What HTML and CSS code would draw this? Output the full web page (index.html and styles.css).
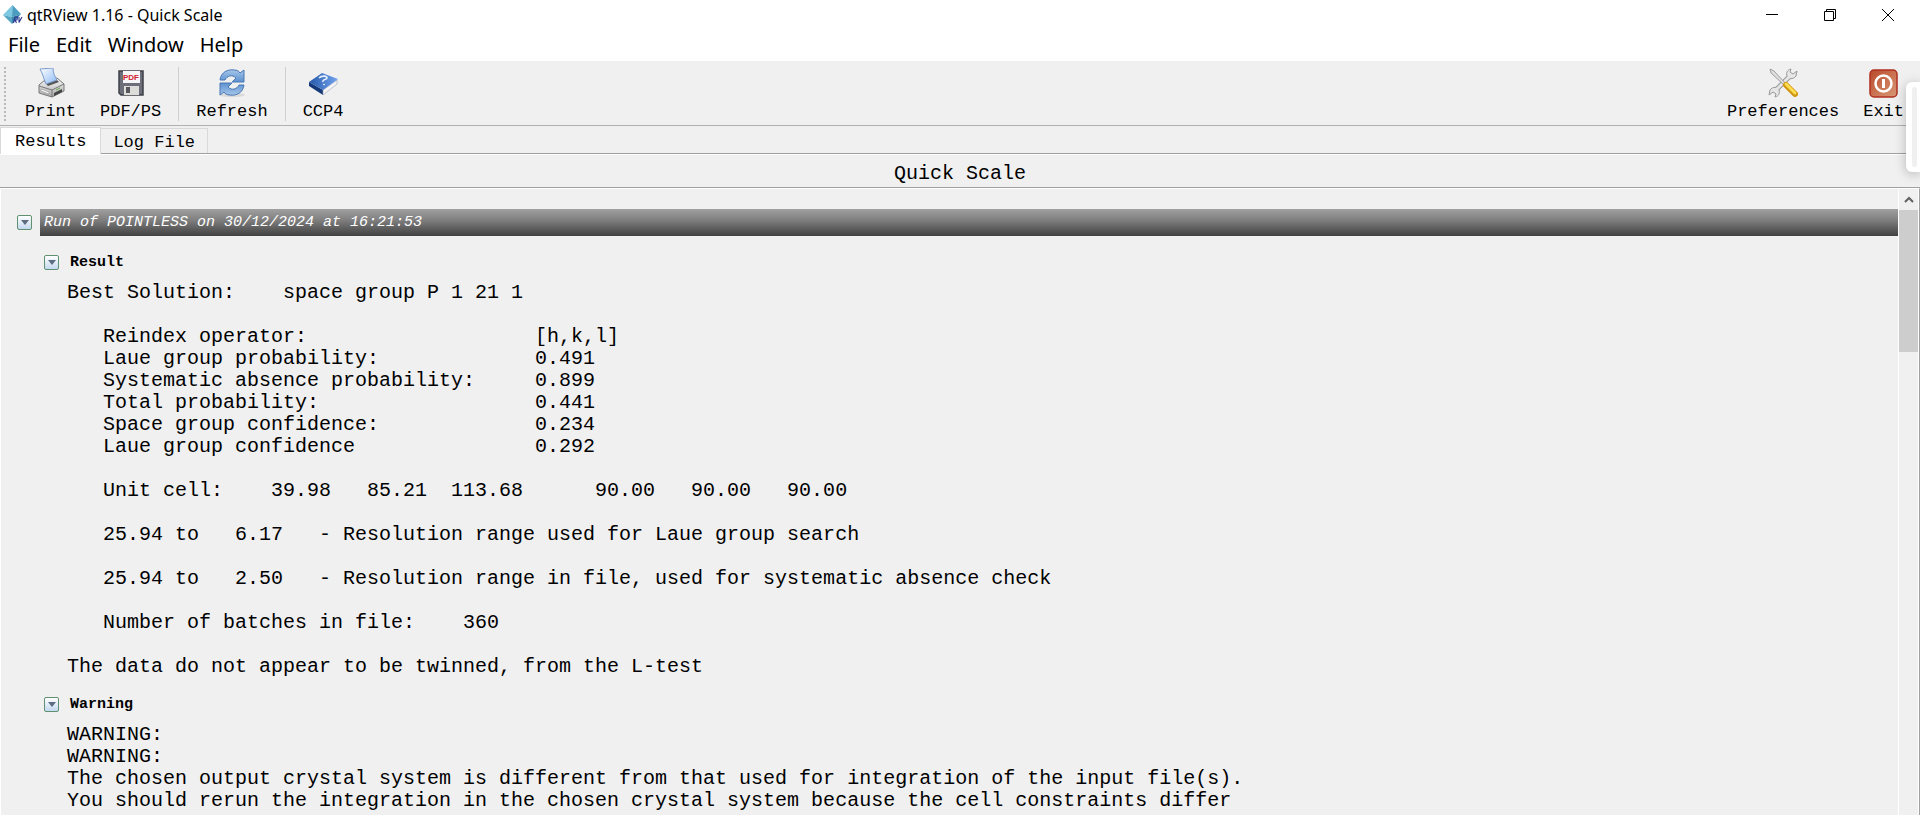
FILE: index.html
```
<!DOCTYPE html>
<html lang="en">
<head>
<meta charset="utf-8">
<title>qtRView 1.16 - Quick Scale</title>
<link rel="stylesheet" href="styles.css">
</head>
<body>
<div class="window">
  <header class="titlebar">
    <svg class="app-icon" viewBox="0 0 20 20" aria-hidden="true">
      <path d="M9.500 0L0 10l9 2z" fill="#7cc8e0"/><path d="M9.500 0L18 9l-9 3z" fill="#4a9dbe"/>
      <path d="M0 10l9 9v-7z" fill="#56a6c4"/><path d="M18 9l-9 10v-7z" fill="#3a86a8"/>
      <path d="M10.500 18l1.500-6h2.500l-.5 3h-2l1.500 3M16 12v5.500l3-5.500" fill="none" stroke="#2b3590" stroke-width="1.100"/>
    </svg>
    <h1 class="caption">qtRView 1.16 - Quick Scale</h1>
    <div class="window-buttons">
      <button class="window-button" aria-label="Minimize"><svg viewBox="0 0 12 12"><path d="M0 5.500h12"/></svg></button>
      <button class="window-button" aria-label="Restore"><svg viewBox="0 0 12 12"><path d="M.5 2.500h9v9h-9zM2.500 2.500v-2h9v9h-2"/></svg></button>
      <button class="window-button" aria-label="Close"><svg viewBox="0 0 12 12"><path d="M0 0l12 12M12 0L0 12"/></svg></button>
    </div>
  </header>
  <nav class="menubar">
    <button class="menu">File</button>
    <button class="menu">Edit</button>
    <button class="menu">Window</button>
    <button class="menu">Help</button>
  </nav>
  <div class="toolbar" role="toolbar">
    <span class="grip"></span>
    <button class="tool">
      <svg class="tool-icon" viewBox="0 0 30 30" aria-hidden="true">
        <defs>
          <linearGradient id="paper" x2="1" y2="1"><stop stop-color="#fff"/><stop offset="1" stop-color="#8db9f5"/></linearGradient>
          <linearGradient id="metal" x2="0" y2="1"><stop stop-color="#fafafa"/><stop offset="1" stop-color="#a8a8a8"/></linearGradient>
        </defs>
        <path d="M3 17l7-6 11-1 7 6v7l-12 6-13-4z" fill="url(#metal)" stroke="#777"/>
        <path d="M8 13l12-2 3 3-11 4z" fill="#555"/>
        <path d="M4 1l13-1c0 5 2 9 4 12l-11 4C8 12 7 6 4 1z" fill="url(#paper)" stroke="#7c9cca"/>
        <path d="M3 18l13 4 12-6M16 22v7" fill="none" stroke="#777"/>
        <path d="M5 21l8 3v2l-8-3z" fill="#fff" stroke="#999" stroke-width=".7"/>
        <path d="M18 25l8-4v3l-8 4z" fill="#444"/><path d="M20 22l4-2" stroke="#60b040"/>
      </svg>
      Print
    </button>
    <button class="tool">
      <svg class="tool-icon" viewBox="0 0 30 30" aria-hidden="true">
        <path d="M3 3h24v24H5l-2-2z" fill="#6c6f7a" stroke="#3e4048" stroke-width="1.500"/>
        <path d="M7 3h17v12H7z" fill="#f6f6f8"/>
        <path d="M8 18h15v9H8z" fill="#dcdcd8"/><path d="M10 19h4v6h-4z" fill="#55575c"/>
        <text class="pdf-mark" x="7" y="12">PDF</text>
      </svg>
      PDF/PS
    </button>
    <span class="divider"></span>
    <button class="tool">
      <svg class="tool-icon" viewBox="0 0 30 30" aria-hidden="true">
        <defs><linearGradient id="sync" x2="0" y2="1"><stop stop-color="#a6c6ea"/><stop offset="1" stop-color="#5c90cf"/></linearGradient></defs>
        <ellipse cx="15" cy="27" rx="13" ry="2" fill="#dadada"/>
        <path id="arrow" d="M3 12C4 4 11 1 17 2c3 0 5 1 6 3l4-3v12H15l4-4c-4-4-9-2-11 2z" fill="url(#sync)" stroke="#4878b4"/>
        <use href="#arrow" transform="rotate(180 15 14.500)"/>
      </svg>
      Refresh
    </button>
    <span class="divider"></span>
    <button class="tool">
      <svg class="tool-icon" viewBox="0 0 30 30" aria-hidden="true">
        <defs><linearGradient id="cover" x2="1"><stop stop-color="#2458a8"/><stop offset="1" stop-color="#74a4f0"/></linearGradient></defs>
        <path d="M1 14v4l14 9v-5z" fill="#143878"/>
        <path d="M15 22l14-10v4l-14 11z" fill="#f4f4f4" stroke="#9aa4b8" stroke-width=".6"/>
        <path d="M1 14l13-9 16 6-15 11z" fill="url(#cover)"/>
        <path d="M11 10c3-3 8-2 8 0s-5 1-4 4M15.500 16l1 1" fill="none" stroke="#e6f0ff" stroke-width="1.600"/>
      </svg>
      CCP4
    </button>
    <span class="spacer"></span>
    <button class="tool">
      <svg class="tool-icon" viewBox="0 0 30 30" aria-hidden="true">
        <path d="M6 24L23 7" stroke="#999" stroke-width="5"/>
        <path d="M23 1c-4 1-5 4-4 7s6 4 9 0l1-5-4 3-3-2z" fill="#e6e6e6" stroke="#999"/>
        <path d="M7 29c4-1 5-4 4-7s-6-4-9 0l-1 5 4-3 3 2z" fill="#e6e6e6" stroke="#999"/>
        <path d="M7 23L22 8" stroke="#e6e6e6" stroke-width="3"/>
        <path d="M2 1l4 2 12 13-2 1L3 5z" fill="#ddd" stroke="#8c8c8c" stroke-width=".8"/>
        <path d="M18 17l9 9" stroke="#cf9610" stroke-width="6" stroke-linecap="round"/><path d="M18 16l9 9" stroke="#ffdc50" stroke-width="3" stroke-linecap="round"/>
      </svg>
      Preferences
    </button>
    <button class="tool">
      <svg class="tool-icon" viewBox="0 0 30 30" aria-hidden="true">
        <defs><linearGradient id="exit" x2="1" y2="1"><stop stop-color="#b9492a"/><stop offset="1" stop-color="#d99a78"/></linearGradient></defs>
        <rect x="1" y="2" width="27" height="27" rx="4" fill="url(#exit)" stroke="#b03020" stroke-width="1.500"/>
        <circle cx="14.500" cy="15.500" r="8" fill="none" stroke="#fff" stroke-width="2.500"/><path d="M14.500 11v9" stroke="#fff" stroke-width="3"/>
      </svg>
      Exit
    </button>
  </div>
  <div class="tabs" role="tablist">
    <button class="tab tab-active" role="tab" aria-selected="true">Results</button>
    <button class="tab" role="tab" aria-selected="false">Log File</button>
  </div>
  <h2 class="heading">Quick Scale</h2>
  <div class="body">
    <main class="report">
      <div class="run">
        <button class="toggle" aria-label="Collapse run"></button>
        <h3 class="run-title">Run of POINTLESS on 30/12/2024 at 16:21:53</h3>
      </div>
      <section class="section">
        <div class="section-head"><button class="toggle" aria-label="Collapse Result"></button><h4 class="section-title">Result</h4></div>
<pre class="output">Best Solution:    space group P 1 21 1

   Reindex operator:                   [h,k,l]
   Laue group probability:             0.491
   Systematic absence probability:     0.899
   Total probability:                  0.441
   Space group confidence:             0.234
   Laue group confidence               0.292

   Unit cell:    39.98   85.21  113.68      90.00   90.00   90.00

   25.94 to   6.17   - Resolution range used for Laue group search

   25.94 to   2.50   - Resolution range in file, used for systematic absence check

   Number of batches in file:    360

The data do not appear to be twinned, from the L-test</pre>
      </section>
      <section class="section">
        <div class="section-head"><button class="toggle" aria-label="Collapse Warning"></button><h4 class="section-title">Warning</h4></div>
<pre class="output">WARNING:
WARNING:
The chosen output crystal system is different from that used for integration of the input file(s).
You should rerun the integration in the chosen crystal system because the cell constraints differ</pre>
      </section>
    </main>
    <div class="scrollbar">
      <button class="scroll-up" aria-label="Scroll up"><svg viewBox="0 0 10 8"><path d="M1 6l4-4 4 4"/></svg></button>
      <div class="thumb"></div>
    </div>
  </div>
  <div class="side-handle"><span class="side-handle-bar"></span></div>
</div>
</body>
</html>
```
FILE: styles.css
```
* { box-sizing: border-box; }
body { margin: 0; background: #f0f0f0; color: #000; font-family: "Liberation Mono", monospace; overflow: hidden; }
button { border: 0; padding: 0; background: none; color: inherit; font: inherit; }
h1, h2, h3, h4, pre { margin: 0; font: inherit; }
.window { position: relative; display: flex; flex-direction: column; height: 100vh; overflow: hidden; }

.titlebar { display: flex; align-items: center; height: 29px; flex: none; padding: 0 3px; background: #fff; }
.app-icon { width: 20px; height: 20px; }
.caption { margin-left: 4px; font: 16px/20px "Noto Sans", sans-serif; }
.window-buttons { display: flex; margin-left: auto; }
.window-button { display: grid; place-items: center; width: 58px; height: 28px; }
.window-button svg { width: 12px; height: 12px; fill: none; stroke: #000; overflow: visible; }

.menubar { display: flex; gap: 16px; height: 33px; flex: none; padding: 0 8px; background: #fff; border-bottom: 1px solid #f0f0f0; }
.menu { font: 20px/32px "Noto Sans", sans-serif; }

.toolbar { display: flex; height: 64px; flex: none; padding: 5px 4px 4px; border-bottom: 1px solid #b0b0b0; }
.grip { width: 2px; margin-right: 7px; background: repeating-linear-gradient(#b8b8b8 0 2px, transparent 2px 4px); }
.tool { display: flex; flex-direction: column; align-items: center; padding: 1px 12px 0; font-size: 17px; line-height: 27px; }
.tool-icon { width: 30px; height: 30px; flex: none; }
.divider { width: 1px; margin: 0 5px; background: #d0d0d0; }
.spacer { flex: 1; }
.pdf-mark { font: bold 8px "Liberation Sans", sans-serif; fill: #d02030; }

.tabs { display: flex; align-items: flex-end; height: 28px; flex: none; border-bottom: 1px solid #a0a0a0; }
.tab { height: 25px; padding: 2px 12px 0; border: 1px solid #d9d9d9; border-width: 1px 1px 0 0; font-size: 17px; line-height: 24px; }
.tab-active { height: 27px; padding: 2px 14px 0; margin-bottom: -1px; background: #fff; border-left-width: 1px; }
.heading { flex: none; height: 34px; border: 1px solid #a0a0a0; border-width: 0 0 1px; border-top: 1px solid #fff; font-size: 20px; line-height: 38px; text-align: center; }

.body { display: flex; flex: 1; min-height: 0; border: 1px solid #fff; border-width: 1px 0 0 1px; border-right: 1px solid #a0a0a0; }
.report { flex: 1; min-width: 0; padding: 20px 0 0 16px; overflow: hidden; }
.run { display: flex; align-items: center; gap: 8px; }
.run-title { flex: 1; height: 27px; padding-left: 4px; background: linear-gradient(#a0a0a0, #808080 40%, #404040); color: #fff; font-size: 15px; line-height: 27px; font-style: italic; }
.toggle { width: 15px; height: 15px; flex: none; border: 1px solid #5f9070; border-radius: 2px; background: linear-gradient(#fff, #c4d8f0); display: grid; place-items: center; }
.toggle::before { content: ""; border: 4px solid transparent; border-top: 5px solid #5b6b80; border-bottom: 0; }
.section { padding: 15px 0 0 27px; }
.section-head { display: flex; align-items: center; gap: 11px; height: 23px; margin-bottom: 8px; }
.section-title { font-size: 15px; line-height: 20px; font-weight: bold; }
.output { padding-left: 23px; font-size: 20px; line-height: 22px; }

.scrollbar { width: 21px; border: 1px solid #fff; border-width: 0 1px; }
.scroll-up { display: grid; place-items: center; width: 100%; height: 21px; }
.scroll-up svg { width: 10px; height: 8px; fill: none; stroke: #606060; stroke-width: 2; }
.thumb { height: 142px; background: #cdcdcd; }

.side-handle { position: absolute; top: 82px; right: 0; width: 14px; height: 90px; padding: 5px 3px 5px 6px; background: #fff; border-radius: 6px 0 0 6px; box-shadow: 0 2px 12px rgba(0, 0, 0, .25); }
.side-handle-bar { display: block; height: 100%; border-radius: 3px; background: #f0f0f0; }
```
